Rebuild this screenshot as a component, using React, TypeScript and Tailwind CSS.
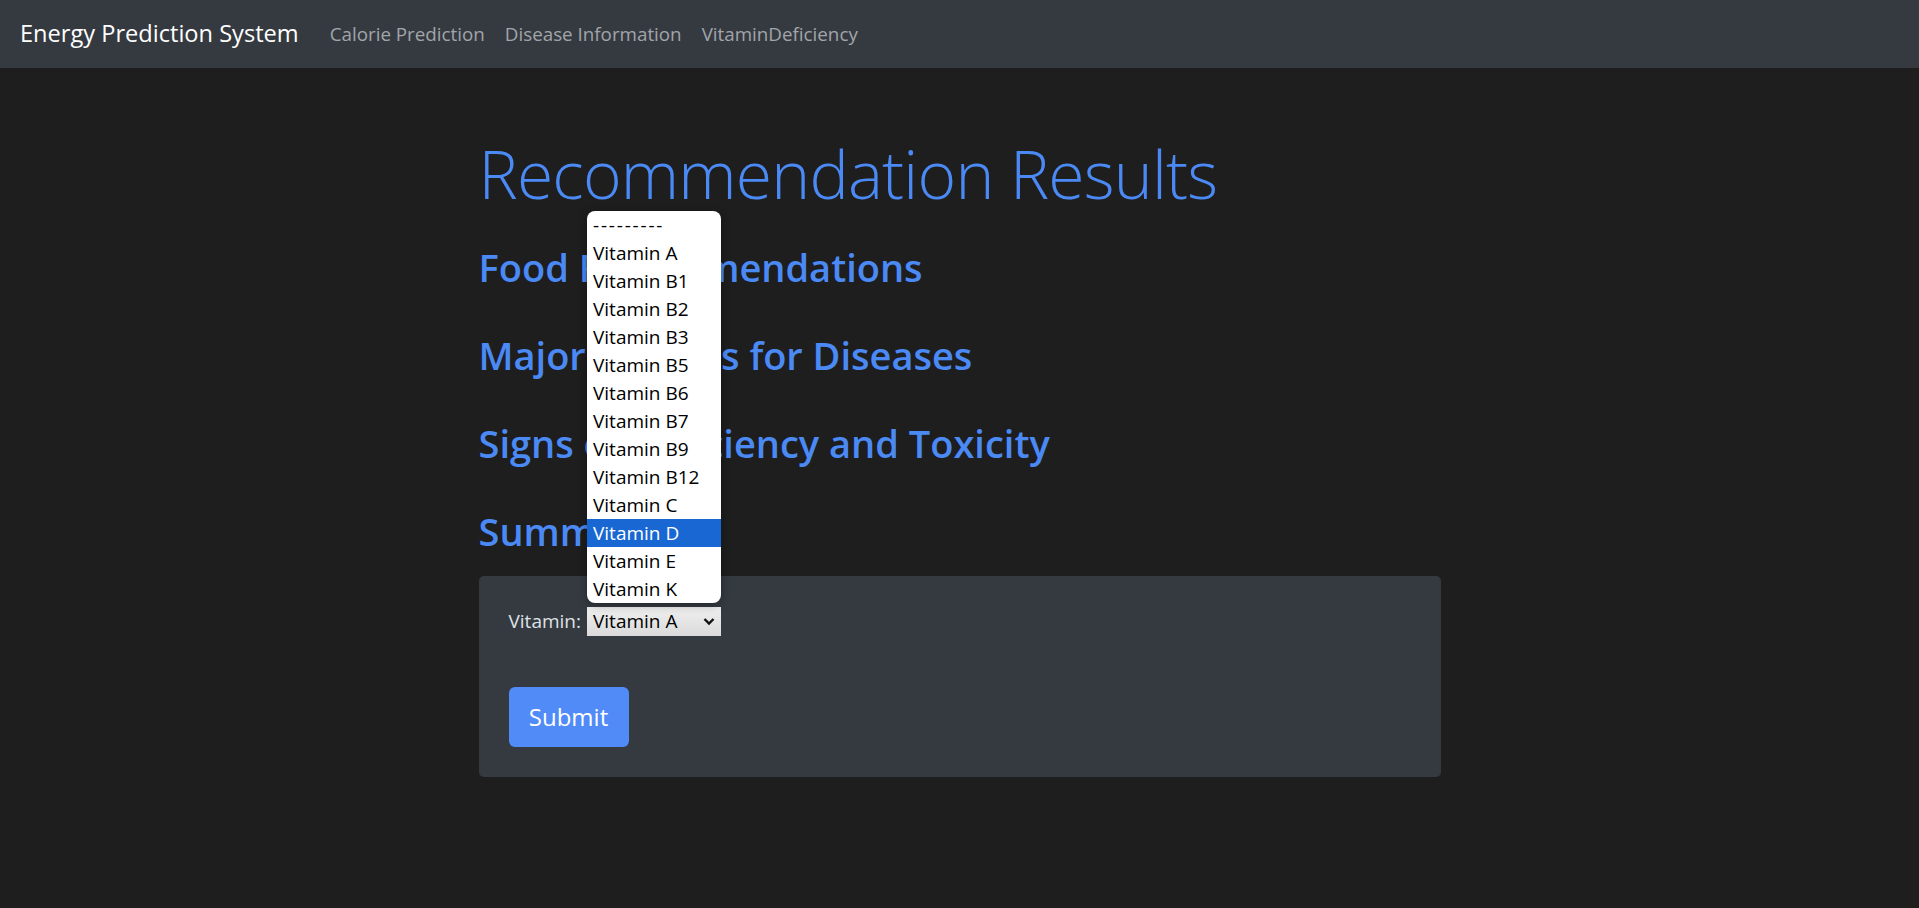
import { useState } from 'react';

const vitamins = [
  '---------',
  'Vitamin A',
  'Vitamin B1',
  'Vitamin B2',
  'Vitamin B3',
  'Vitamin B5',
  'Vitamin B6',
  'Vitamin B7',
  'Vitamin B9',
  'Vitamin B12',
  'Vitamin C',
  'Vitamin D',
  'Vitamin E',
  'Vitamin K',
];

const sections = [
  'Food Recommendations',
  'Major Sources for Diseases',
  'Signs of Deficiency and Toxicity',
  'Summary',
];

export default function App() {
  const [selected] = useState('Vitamin A');
  const [hovered] = useState('Vitamin D');

  return (
    <div className="min-h-[908px] bg-[#1e1e1e] font-['Open_Sans','Noto_Sans',sans-serif]">
      <nav className="h-[68px] bg-[#353a41] flex items-center px-[20px]">
        <span className="text-[23.6px] text-white mr-[21px]">Energy Prediction System</span>
        <div className="flex items-center">
          <a className="px-[10px] text-[18.8px] text-[#a2a5a9]">Calorie Prediction</a>
          <a className="px-[10px] text-[18.8px] text-[#a2a5a9]">Disease Information</a>
          <a className="px-[10px] text-[18.8px] text-[#a2a5a9]">VitaminDeficiency</a>
        </div>
      </nav>

      <div className="w-[962px] mx-auto pt-[63px]">
        <h1 className="text-[66px] leading-[84px] tracking-[-0.8px] font-light text-[#4b8af5]">
          Recommendation Results
        </h1>

        <div className="mt-[28px] flex flex-col gap-[40px]">
          {sections.map(title => (
            <h2 key={title} className="text-[38px] leading-[48px] font-semibold text-[#4b8af5]">
              {title}
            </h2>
          ))}
        </div>

        <div className="mt-[21px] bg-[#353a41] rounded-[5px] px-[30px] pt-[31px] pb-[30px]">
          <div className="flex items-center h-[29px]">
            <label className="text-[19px] text-[#dee2e6] mr-[6px]">Vitamin:</label>
            <div className="relative">
              <div className="w-[134px] h-[29px] flex items-center justify-between pl-[6px] pr-[6px] bg-gradient-to-b from-[#f0f0f0] to-[#dadada] text-[19px] text-black">
                <span>{selected}</span>
                <svg width="12" height="9" viewBox="0 0 12 9">
                  <polyline points="1.5,2 6,6.5 10.5,2" fill="none" stroke="#111" strokeWidth="2.4" />
                </svg>
              </div>

              <div className="absolute left-0 bottom-full mb-[4px] w-[134px] bg-white rounded-[8px] shadow-[0_2px_10px_rgba(0,0,0,0.35)] overflow-hidden">
                {vitamins.map(v => (
                  <div
                    key={v}
                    className={`h-[28px] flex items-center pl-[6px] text-[19px] ${
                      v === hovered ? 'bg-[#1967d2] text-white' : 'text-black'
                    } ${v.startsWith('-') ? 'tracking-[1.8px]' : ''}`}
                  >
                    {v}
                  </div>
                ))}
              </div>
            </div>
          </div>

          <button className="mt-[51px] w-[120px] h-[60px] rounded-[6px] bg-[#508bf8] text-white text-[24px]">
            Submit
          </button>
        </div>
      </div>
    </div>
  );
}
